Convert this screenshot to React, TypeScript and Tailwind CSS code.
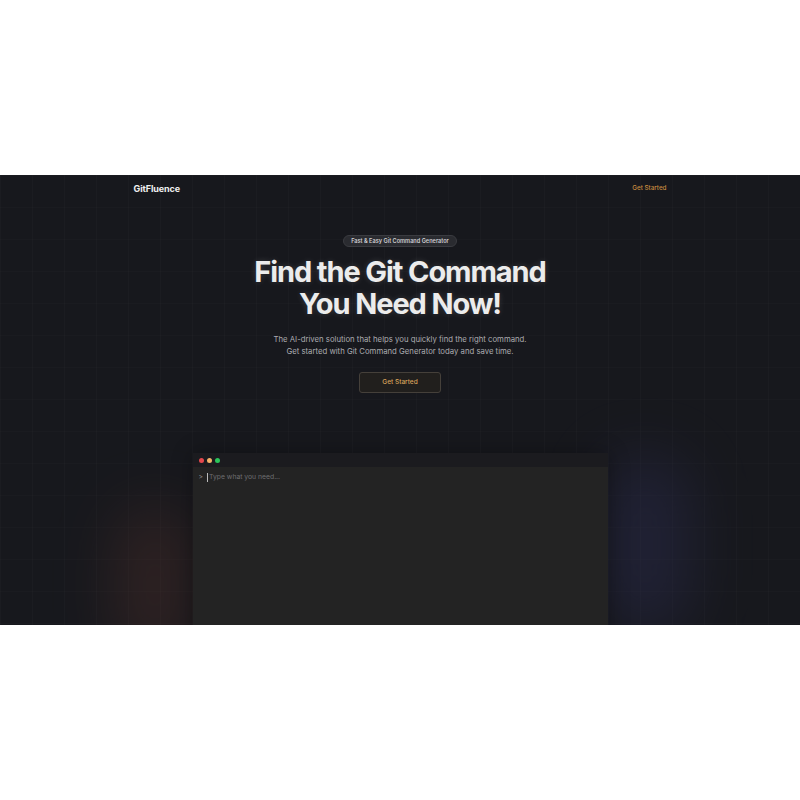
import React from "react";

export default function App() {
  return (
    <div className="flex h-[800px] w-[800px] flex-col justify-center bg-white" style={{ fontFamily: "Inter, 'Noto Sans', sans-serif" }}>
      <section className="relative h-[450px] w-full overflow-hidden bg-[#17181d]">
        {/* grid pattern */}
        <div className="pointer-events-none absolute inset-0 bg-[linear-gradient(to_right,#ffffff04_1px,transparent_1px),linear-gradient(to_bottom,#ffffff03_1px,transparent_1px)] bg-[size:32px_32px]" />
        {/* glows */}
        <div className="pointer-events-none absolute left-[115px] top-[330px] h-[160px] w-[80px] rounded-full bg-[#5a342c] opacity-35 blur-[30px]" />
        <div className="pointer-events-none absolute left-[600px] top-[280px] h-[180px] w-[90px] rounded-full bg-[#2c2d52] opacity-45 blur-[30px]" />

        <div className="relative flex flex-col items-center">
          <nav className="flex h-[27px] w-[533px] items-center justify-between">
            <span className="text-[9px] font-bold tracking-[-0.01em] text-[#f0f0f0]">GitFluence</span>
            <span className="text-[6.3px] font-medium text-[#c98b3f]">Get Started</span>
          </nav>

          <div className="mt-[33px] flex h-[12px] items-center rounded-full border border-[#3a3b40] bg-[#2a2b30] px-[7px]">
            <span className="text-[5.6px] font-semibold text-[#cfcfd2]">Fast &amp; Easy Git Command Generator</span>
          </div>

          <h1 className="mt-[9px] text-center text-[29px] font-bold leading-[32px] tracking-[-0.038em] text-[#ececec] [text-shadow:0_0_6px_rgba(255,255,255,0.15)]">
            Find the Git Command
            <br />
            You Need Now!
          </h1>

          <p className="mt-[13px] text-center text-[7.75px] leading-[12px] text-[#acacb0]">
            The AI-driven solution that helps you quickly find the right command.
            <br />
            Get started with Git Command Generator today and save time.
          </p>

          <button className="mt-[15px] flex h-[21px] w-[82px] items-center justify-center rounded-[3px] border border-[#45403a] bg-[#211f1d] text-[6.5px] font-medium text-[#d9a35c]">
            Get Started
          </button>

          <div className="mt-[60px] flex h-[200px] w-[415px] flex-col shadow-[0_0_20px_rgba(0,0,0,0.3)]">
            <div className="flex h-[14px] items-center gap-[3px] bg-[#1b1b1f] px-[6px]">
              <span className="h-[5px] w-[5px] rounded-full bg-[#e5484d]" />
              <span className="h-[5px] w-[5px] rounded-full bg-[#f5b36b]" />
              <span className="h-[5px] w-[5px] rounded-full bg-[#2bc45a]" />
            </div>
            <div className="flex-1 bg-[#232323] px-[6px] pt-[5px]">
              <div className="flex items-center text-[6.8px] text-[#6d6d70]">
                <span className="mr-[4px] text-[#8a8a8a]">&gt;</span>
                <span className="mr-[1px] h-[9px] w-[1px] bg-[#bbbbbb]" />
                <span>Type what you need...</span>
              </div>
            </div>
          </div>
        </div>
      </section>
    </div>
  );
}
